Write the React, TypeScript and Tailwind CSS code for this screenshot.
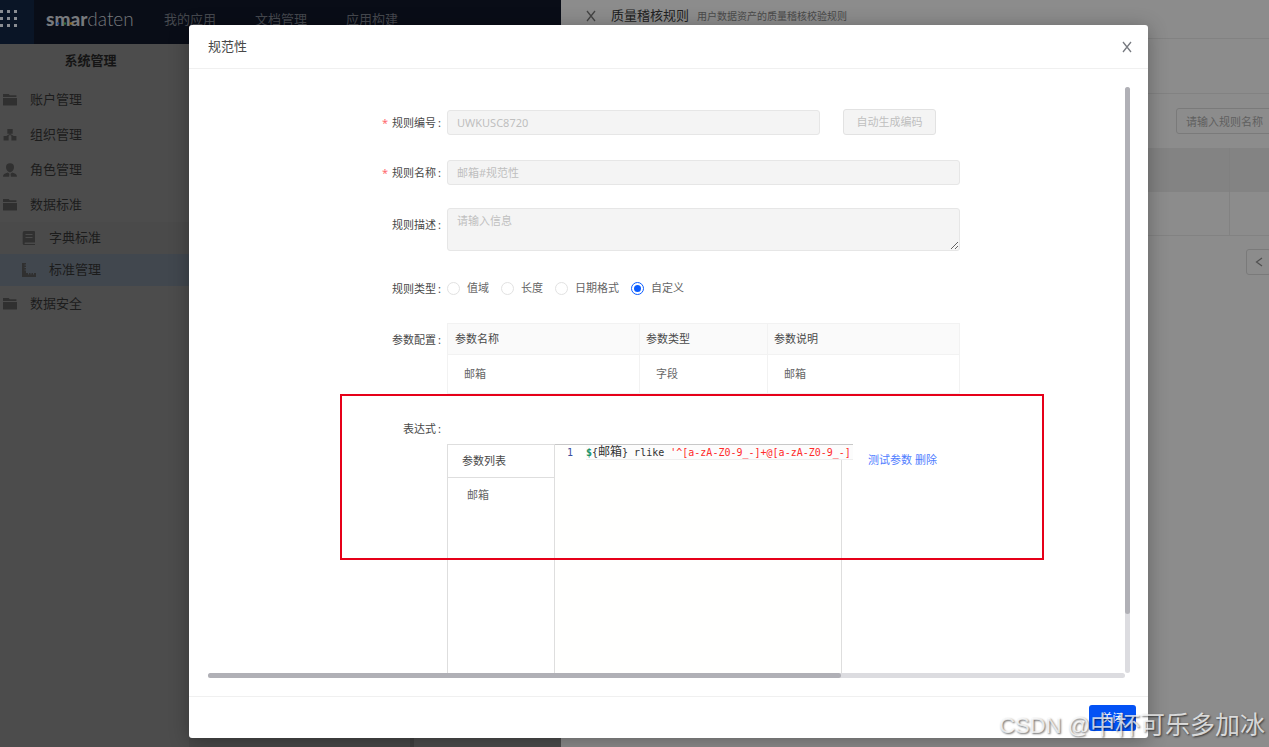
import React from 'react';

type IconProps = { className?: string };

const FolderIcon: React.FC<IconProps> = ({ className }) => (
  <svg viewBox="0 0 12 12" className={className} fill="currentColor" aria-hidden="true">
    <path d="M0 .8h4.800l1 1.200H11.500v1.500H0zM0 4.300h12V10a.8.8 0 0 1-.8.8H.8A.8.8 0 0 1 0 10z" />
  </svg>
);

const OrgIcon: React.FC<IconProps> = ({ className }) => (
  <svg viewBox="0 0 12 12" className={className} fill="currentColor" aria-hidden="true">
    <path d="M3.700.8h4.600v4.200H3.700zM.5 6.800h4.300v4H.5zM7.200 6.800h4.300v4H7.200z" />
    <path d="M6 4.500v1.500M2.700 7.500L6 5.500l3.300 2" stroke="currentColor" strokeWidth="0.900" fill="none" />
  </svg>
);

const UserIcon: React.FC<IconProps> = ({ className }) => (
  <svg viewBox="0 0 14 14" className={className} fill="currentColor" aria-hidden="true">
    <path d="M7 .2c2.600 0 4 1.700 4 3.900 0 2-1 3.700-2.200 4.500L7 9.500l-1.800-.9C4 7.800 3 6.100 3 4.100 3 1.900 4.400.2 7 .2z" />
    <path d="M4.800 9.500l1.700 1.300-.4 2.900H0c0-2.700 2-3.300 4.800-4.200zM9.200 9.500l-1.700 1.300.4 2.900H14c0-2.700-2-3.300-4.800-4.200z" />
  </svg>
);

const BookIcon: React.FC<IconProps> = ({ className }) => (
  <svg viewBox="0 0 14 14" className={className} fill="currentColor" aria-hidden="true">
    <path
      fillRule="evenodd"
      d="M2.500 0H12a1 1 0 0 1 1 1v10.500H3a.8.8 0 0 0 0 1.500h10v1H2.500A1.800 1.800 0 0 1 .7 12V2A2 2 0 0 1 2.500 0zM3.500 3v1h7V3zM3.500 6v1h7V6z"
    />
  </svg>
);

const RulerIcon: React.FC<IconProps> = ({ className }) => (
  <svg viewBox="0 0 14 14" className={className} fill="currentColor" aria-hidden="true">
    <path
      fillRule="evenodd"
      d="M0 0h4v10h10v4H0zM2.500 1.500v1H4v-1zM2.500 4v1H4V4zM2.500 6.500v1H4v-1zM6 10v1.500h1V10zM8.500 10v1.500h1V10zM11 10v1.500h1V10z"
    />
  </svg>
);

const CloseIcon: React.FC<IconProps> = ({ className }) => (
  <svg viewBox="0 0 10 12" className={className} stroke="currentColor" strokeWidth="1.300" fill="none" aria-hidden="true">
    <path d="M1 1l8 10M9 1L1 11" />
  </svg>
);

const navItems = ['我的应用', '文档管理', '应用构建'];

const menuItems = [
  { key: 'account', label: '账户管理', Icon: FolderIcon },
  { key: 'org', label: '组织管理', Icon: OrgIcon },
  { key: 'role', label: '角色管理', Icon: UserIcon },
  { key: 'standard', label: '数据标准', Icon: FolderIcon },
  { key: 'dictionary', label: '字典标准', Icon: BookIcon, indent: true },
  { key: 'standard-manage', label: '标准管理', Icon: RulerIcon, indent: true, active: true },
  { key: 'security', label: '数据安全', Icon: FolderIcon },
];

const ruleTypes = ['值域', '长度', '日期格式', '自定义'];

const params = [{ name: '邮箱', type: '字段', desc: '邮箱' }];

const inputClass =
  'block h-[25px] rounded-[3px] border border-[#e6e6e6] bg-[#f4f4f4] px-[9px] text-[11px] text-[#bfbfbf] placeholder:text-[#bfbfbf]';

const TopBar: React.FC = () => (
  <header className="flex h-11 bg-[#090d17]">
    <button aria-label="应用列表" className="w-[34px] bg-[#0a1526] pb-1.5 text-[#8a8d92]">
      <svg viewBox="0 0 18 18" className="h-[18px] w-[18px]" fill="currentColor">
        {[0, 7, 14].map(y => [0, 7, 14].map(x => <rect key={`${x}-${y}`} x={x} y={y} width="3" height="3" />))}
      </svg>
    </button>
    <div className="relative ml-3 flex w-[118px] items-center pb-1.5 font-['Lato','Liberation_Sans',sans-serif] text-[19px] text-[#77797d]">
      <span className="font-black">smar</span>
      <span className="font-light">daten</span>
      <svg viewBox="0 0 30 3" className="absolute top-[22px] left-2.5 h-[3px] w-[30px]">
        <circle cx="2" cy="1.500" r="1.200" fill="#1d4a8f" />
        <circle cx="9" cy="1.500" r="1.200" fill="#2d6b3c" />
        <circle cx="15" cy="1.500" r="1.200" fill="#8f6a1d" />
      </svg>
    </div>
    <nav className="flex items-center gap-[39px] pb-1 text-[13px] text-[#45484e]">
      {navItems.map(item => (
        <a key={item} href="#">
          {item}
        </a>
      ))}
    </nav>
  </header>
);

const Sidebar: React.FC = () => (
  <aside className="w-[189px] bg-[#4c4c4c]">
    <h2 className="mb-1 flex h-[34px] items-center justify-center pr-2 text-[13px] font-bold text-[#151515]">系统管理</h2>
    <ul>
      {menuItems.map(({ key, label, Icon, indent, active }) => (
        <li key={key}>
          <a
            href="#"
            className={`flex items-center text-[13px] text-[#1c1c1c] ${
              indent ? 'h-8 gap-[13px] pl-[22px]' : 'h-[35px] gap-[13px] pl-[3px]'
            } ${active ? 'bg-[#41474e]' : ''} ${indent && !active ? 'bg-[#4a4a4a]' : ''}`}
          >
            <Icon className="h-[14px] w-[14px] text-[#303030]" />
            {label}
          </a>
        </li>
      ))}
    </ul>
  </aside>
);

// panel that slides in from the right, below the dialog
const RuleDrawer: React.FC = () => (
  <section className="absolute inset-y-0 right-0 left-[561px] overflow-hidden bg-[#8c8c8c]">
    <div className="flex h-[39px] items-center border-b border-[#828282] pb-1.5 pl-[25px]">
      <button aria-label="关闭抽屉" className="text-[#444]">
        <CloseIcon className="h-3 w-2.5" />
      </button>
      <h2 className="ml-[15px] text-[13px] text-[#222]">质量稽核规则</h2>
      <span className="ml-2 text-[10px] text-[#4a4a4a]">用户数据资产的质量稽核校验规则</span>
    </div>
    <div className="h-[55px] border-b border-[#828282]" />
    <div className="flex h-[54px] items-center justify-end overflow-hidden">
      <input
        aria-label="规则名称"
        placeholder="请输入规则名称"
        className="-mr-1 h-[26px] w-[97px] rounded-[3px] border border-[#7a7a7a] pl-[9px] text-[11px] placeholder:text-[#5f5f5f]"
      />
    </div>
    <table className="w-full table-fixed border-collapse">
      <thead>
        <tr className="h-11 bg-[#838383]">
          <th />
          <th className="w-10 border-l border-[#808080]" />
        </tr>
      </thead>
      <tbody>
        <tr className="h-[43px]">
          <td className="border-b border-[#828282]" />
          <td className="border-b border-l border-[#828282]" />
        </tr>
      </tbody>
    </table>
    <div className="mt-[13px] flex justify-end">
      <button
        aria-label="上一页"
        className="-mr-0.5 flex h-[26px] w-[25px] items-center justify-center rounded-[3px] border border-[#7a7a7a] text-[#505050]"
      >
        <svg viewBox="0 0 8 10" className="h-2.5 w-2" stroke="currentColor" strokeWidth="1.200" fill="none">
          <path d="M7 1L1.500 5L7 9" />
        </svg>
      </button>
    </div>
  </section>
);

type FormRowProps = {
  label: string;
  htmlFor?: string;
  required?: boolean;
  className?: string;
  children?: React.ReactNode;
};

const FormRow: React.FC<FormRowProps> = ({ label, htmlFor, required, className, children }) => (
  <div className={`flex ${className ?? ''}`}>
    <label
      htmlFor={htmlFor}
      className="mr-1.5 flex h-8 w-[233px] shrink-0 items-center justify-end pt-0.5 text-[11px] text-[#484848]"
    >
      {required && <span className="mr-1 text-[#ff6b6e]">*</span>}
      {label}
      <span className="ml-0.5">:</span>
    </label>
    {children}
  </div>
);

const ExpressionEditor: React.FC = () => (
  <div className="flex h-[260px] shrink-0 text-[11px]">
    <div className="w-[108px] border-t border-r border-l border-[#dedede]">
      <div className="flex h-[33px] items-center border-b border-[#dedede] pl-[14px] text-[#484848]">参数列表</div>
      <div className="flex h-[34px] items-center pl-[19px] text-[#666]">邮箱</div>
    </div>
    <div className="w-[287px] border-r border-[#dedede] bg-[#fffffe]">
      <div className="flex h-4 w-[298px] items-center overflow-hidden border-t border-[#c8c8c8] font-['DejaVu_Sans_Mono','Noto_Sans_CJK_SC',monospace] text-[10px] whitespace-nowrap">
        <span className="w-[31px] shrink-0 pl-3 text-[#3b4f9e]">1</span>
        <code className="flex h-full flex-1 items-center border-b border-[#eeeeee] bg-[#fcfcfc] font-[inherit] whitespace-pre text-[#333]">
          <span className="font-bold text-[#1a9268]">$</span>
          {'{'}
          <span className="text-xs leading-none">邮箱</span>
          {'} rlike '}
          <span className="text-[#ff2a2a]">{"'^[a-zA-Z0-9_-]+@[a-zA-Z0-9_-]"}</span>
        </code>
      </div>
    </div>
    <div className="ml-[26px] flex h-8 items-center gap-[3px] text-[#4f7dff]">
      <a href="#">测试参数</a>
      <a href="#">删除</a>
    </div>
  </div>
);

const RuleForm: React.FC = () => (
  <form className="w-[1330px]">
    <FormRow label="规则编号" htmlFor="rule-code" required className="mt-[19px] items-center">
      <input id="rule-code" disabled defaultValue="UWKUSC8720" className={`${inputClass} w-[373px]`} />
      <button
        type="button"
        disabled
        className="ml-[23px] h-[26px] w-[93px] rounded-[3px] border border-[#e2e2e2] bg-[#f4f4f4] text-[11px] text-[#bfbfbf]"
      >
        自动生成编码
      </button>
    </FormRow>
    <FormRow label="规则名称" htmlFor="rule-name" required className="mt-[18px] items-center">
      <input id="rule-name" disabled defaultValue="邮箱#规范性" className={`${inputClass} w-[513px]`} />
    </FormRow>
    <FormRow label="规则描述" htmlFor="rule-desc" className="mt-5">
      <textarea
        id="rule-desc"
        disabled
        placeholder="请输入信息"
        className="block h-[43px] w-[513px] resize rounded-[3px] border border-[#e6e6e6] bg-[#f4f4f4] px-[9px] py-1 text-[11px] leading-4 placeholder:text-[#bfbfbf]"
      />
    </FormRow>
    <FormRow label="规则类型" className="mt-[21px]">
      <div className="flex items-center gap-3 text-[11px] text-[#666]">
        {ruleTypes.map(type => (
          <label key={type} className="flex items-center gap-[7px]">
            <input
              type="radio"
              name="rule-type"
              defaultChecked={type === '自定义'}
              className="flex h-[13px] w-[13px] appearance-none items-center justify-center rounded-full border border-[#e2e2e2] bg-white before:h-[7px] before:w-[7px] before:rounded-full checked:border-[#0a5cff] checked:before:bg-[#0a5cff]"
            />
            {type}
          </label>
        ))}
      </div>
    </FormRow>
    <FormRow label="参数配置" className="mt-[19px]">
      <table className="w-[513px] table-fixed border-collapse text-left text-[11px]">
        <thead>
          <tr className="h-[31px] bg-[#fafafa] text-[#484848]">
            <th className="w-48 border border-[#f2f2f2] px-[7px] font-normal">参数名称</th>
            <th className="w-32 border border-[#f2f2f2] px-1.5 font-normal">参数类型</th>
            <th className="border border-[#f2f2f2] px-1.5 font-normal">参数说明</th>
          </tr>
        </thead>
        <tbody>
          {params.map(param => (
            <tr key={param.name} className="h-[39px] text-[#666]">
              <td className="border border-[#f2f2f2] px-4">{param.name}</td>
              <td className="border border-[#f2f2f2] px-4">{param.type}</td>
              <td className="border border-[#f2f2f2] px-4">{param.desc}</td>
            </tr>
          ))}
        </tbody>
      </table>
    </FormRow>
    <FormRow label="表达式" className="mt-[18px]" />
    <div className="pl-[239px]">
      <ExpressionEditor />
    </div>
  </form>
);

const RuleDialog: React.FC = () => (
  <div
    role="dialog"
    aria-label="规范性"
    className="relative flex flex-1 flex-col rounded-[3px] bg-white shadow-[0_3px_20px_rgba(0,0,0,0.3)]"
  >
    <div className="flex h-11 shrink-0 items-center justify-between border-b border-[#f0f0f0] pr-4 pl-[19px]">
      <h1 className="text-[13px] text-[#484848]">规范性</h1>
      <button aria-label="关闭" className="text-[#777a80]">
        <CloseIcon className="h-3 w-2.5" />
      </button>
    </div>
    <div className="grid min-h-0 flex-1 grid-cols-[minmax(0,1fr)_5px] grid-rows-[minmax(0,1fr)_5px] py-[18px] pr-[18px] pl-[19px]">
      <div className="overflow-hidden">
        <RuleForm />
      </div>
      <div className="rounded-full bg-[#dcdce0]">
        <div className="h-[90%] rounded-full bg-[#b0b0b6]" />
      </div>
      <div className="rounded-full bg-[#dcdce0]">
        <div className="h-full w-[69%] rounded-full bg-[#b0b0b6]" />
      </div>
    </div>
    <div className="flex h-[42px] shrink-0 items-center justify-end border-t border-[#f0f0f0] pr-3">
      <button className="h-[26px] w-[47px] rounded-[3px] bg-[#0352f5] pt-0.5 text-[11px] text-white">关闭</button>
    </div>
    <div className="pointer-events-none absolute top-[369px] left-[151px] h-[166px] w-[704px] border-2 border-[#e60019]" />
  </div>
);

export default function App() {
  return (
    <div className="relative flex h-screen flex-col overflow-hidden bg-[#4c4c4c] font-['Noto_Sans','Noto_Sans_CJK_SC',sans-serif]">
      <TopBar />
      <main className="flex flex-1">
        <Sidebar />
        <div className="w-[225px] border-r-4 border-[#404040] bg-[#484848]" />
      </main>
      <RuleDrawer />
      <div className="absolute inset-0 flex pt-[25px] pr-[121px] pb-[9px] pl-[189px]">
        <RuleDialog />
      </div>
      <div className="pointer-events-none absolute right-1 bottom-[3px] flex items-center font-['Liberation_Sans','Noto_Sans_CJK_SC',sans-serif] text-[25px] whitespace-nowrap text-white/75 [text-shadow:1px_1px_2px_rgba(0,0,0,0.6)]">
        <span className="text-[22px]">CSDN @</span>
        <span>中杯可乐多加冰</span>
      </div>
    </div>
  );
}
